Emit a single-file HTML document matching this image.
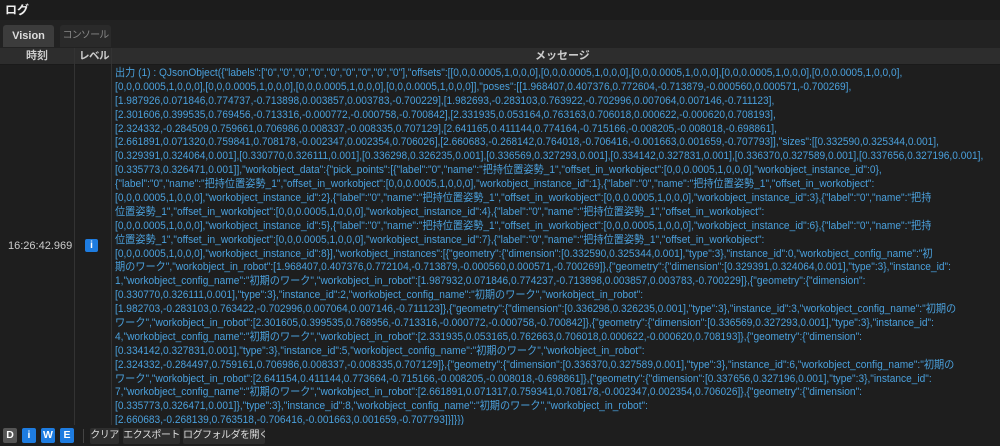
<!DOCTYPE html>
<html><head><meta charset="utf-8"><style>
*{margin:0;padding:0;box-sizing:border-box}
html,body{width:1000px;height:446px;overflow:hidden}
body{background:#1e1e1e;font-family:"Liberation Sans","Noto Sans CJK JP",sans-serif;color:#ddd;position:relative}
.title{position:absolute;left:0;top:0;width:1000px;height:20px;background:#1c1c1c;font-size:12px;line-height:20px;padding-left:5px;color:#eee;font-weight:bold}
.tabs{position:absolute;left:0;top:20px;width:1000px;height:28px;background:#222}
.tab{position:absolute;top:5px;height:22px;border-radius:3px 3px 0 0;font-size:11px;line-height:22px;text-align:center;white-space:nowrap;overflow:hidden}
.hdr{position:absolute;left:0;top:48px;width:1000px;height:17px;background:#2d2d2d;font-size:11px;line-height:17px;font-weight:bold;color:#ccc;border-bottom:1px solid #1a1a1a;white-space:nowrap}
.vl{position:absolute;top:48px;width:1px;height:377px;background:#333}
.lines{position:absolute;left:115px;top:67px;font-size:11px;line-height:13.9px;color:#4aa0dc;white-space:nowrap;transform-origin:0 0}
.lines div{height:13.9px}
.bar{position:absolute;left:0;top:425px;width:1000px;height:21px;background:#1e1e1e}
.b{position:absolute;top:3px;height:15px;border-radius:2px;font-size:10.5px;line-height:15px;text-align:center;font-weight:bold;color:#fff}
.btn{position:absolute;top:3px;height:16px;background:#2e2e2e;border-radius:2px;font-size:10px;line-height:16px;text-align:center;color:#ddd;white-space:nowrap;overflow:hidden;letter-spacing:-0.5px}
</style></head><body>
<div class="title">ログ</div>
<div class="tabs">
<div class="tab" style="left:3px;width:51px;background:#3c3c3c;color:#ddd;font-weight:bold">Vision</div>
<div class="tab" style="left:60px;width:51px;background:#2a2a2a;color:#888;font-size:10px;letter-spacing:-0.8px">コンソール</div>
</div>
<div class="hdr"><span style="position:absolute;left:26px">時刻</span><span style="position:absolute;left:79px;font-size:10.5px;letter-spacing:-0.5px">レベル</span><span style="position:absolute;left:535px">メッセージ</span></div>
<div class="vl" style="left:74px"></div><div class="vl" style="left:111px"></div>
<div style="position:absolute;left:8px;top:240px;font-size:11px;color:#ccc">16:26:42.969</div>
<div style="position:absolute;left:85px;top:239px;width:13px;height:13px;background:#1e7ce0;border-radius:2px;color:#fff;font-size:10px;font-weight:bold;text-align:center;line-height:13px">i</div>
<div class="lines" id="L">
<div>出力 (1) : QJsonObject({"labels":["0","0","0","0","0","0","0","0","0"],"offsets":[[0,0,0.0005,1,0,0,0],[0,0,0.0005,1,0,0,0],[0,0,0.0005,1,0,0,0],[0,0,0.0005,1,0,0,0],[0,0,0.0005,1,0,0,0],</div>
<div>[0,0,0.0005,1,0,0,0],[0,0,0.0005,1,0,0,0],[0,0,0.0005,1,0,0,0],[0,0,0.0005,1,0,0,0]],"poses":[[1.968407,0.407376,0.772604,-0.713879,-0.000560,0.000571,-0.700269],</div>
<div>[1.987926,0.071846,0.774737,-0.713898,0.003857,0.003783,-0.700229],[1.982693,-0.283103,0.763922,-0.702996,0.007064,0.007146,-0.711123],</div>
<div>[2.301606,0.399535,0.769456,-0.713316,-0.000772,-0.000758,-0.700842],[2.331935,0.053164,0.763163,0.706018,0.000622,-0.000620,0.708193],</div>
<div>[2.324332,-0.284509,0.759661,0.706986,0.008337,-0.008335,0.707129],[2.641165,0.411144,0.774164,-0.715166,-0.008205,-0.008018,-0.698861],</div>
<div>[2.661891,0.071320,0.759841,0.708178,-0.002347,0.002354,0.706026],[2.660683,-0.268142,0.764018,-0.706416,-0.001663,0.001659,-0.707793]],"sizes":[[0.332590,0.325344,0.001],</div>
<div>[0.329391,0.324064,0.001],[0.330770,0.326111,0.001],[0.336298,0.326235,0.001],[0.336569,0.327293,0.001],[0.334142,0.327831,0.001],[0.336370,0.327589,0.001],[0.337656,0.327196,0.001],</div>
<div>[0.335773,0.326471,0.001]],"workobject_data":{"pick_points":[{"label":"0","name":"把持位置姿勢_1","offset_in_workobject":[0,0,0.0005,1,0,0,0],"workobject_instance_id":0},</div>
<div>{"label":"0","name":"把持位置姿勢_1","offset_in_workobject":[0,0,0.0005,1,0,0,0],"workobject_instance_id":1},{"label":"0","name":"把持位置姿勢_1","offset_in_workobject":</div>
<div>[0,0,0.0005,1,0,0,0],"workobject_instance_id":2},{"label":"0","name":"把持位置姿勢_1","offset_in_workobject":[0,0,0.0005,1,0,0,0],"workobject_instance_id":3},{"label":"0","name":"把持</div>
<div>位置姿勢_1","offset_in_workobject":[0,0,0.0005,1,0,0,0],"workobject_instance_id":4},{"label":"0","name":"把持位置姿勢_1","offset_in_workobject":</div>
<div>[0,0,0.0005,1,0,0,0],"workobject_instance_id":5},{"label":"0","name":"把持位置姿勢_1","offset_in_workobject":[0,0,0.0005,1,0,0,0],"workobject_instance_id":6},{"label":"0","name":"把持</div>
<div>位置姿勢_1","offset_in_workobject":[0,0,0.0005,1,0,0,0],"workobject_instance_id":7},{"label":"0","name":"把持位置姿勢_1","offset_in_workobject":</div>
<div>[0,0,0.0005,1,0,0,0],"workobject_instance_id":8}],"workobject_instances":[{"geometry":{"dimension":[0.332590,0.325344,0.001],"type":3},"instance_id":0,"workobject_config_name":"初</div>
<div>期のワーク","workobject_in_robot":[1.968407,0.407376,0.772104,-0.713879,-0.000560,0.000571,-0.700269]},{"geometry":{"dimension":[0.329391,0.324064,0.001],"type":3},"instance_id":</div>
<div>1,"workobject_config_name":"初期のワーク","workobject_in_robot":[1.987932,0.071846,0.774237,-0.713898,0.003857,0.003783,-0.700229]},{"geometry":{"dimension":</div>
<div>[0.330770,0.326111,0.001],"type":3},"instance_id":2,"workobject_config_name":"初期のワーク","workobject_in_robot":</div>
<div>[1.982703,-0.283103,0.763422,-0.702996,0.007064,0.007146,-0.711123]},{"geometry":{"dimension":[0.336298,0.326235,0.001],"type":3},"instance_id":3,"workobject_config_name":"初期の</div>
<div>ワーク","workobject_in_robot":[2.301605,0.399535,0.768956,-0.713316,-0.000772,-0.000758,-0.700842]},{"geometry":{"dimension":[0.336569,0.327293,0.001],"type":3},"instance_id":</div>
<div>4,"workobject_config_name":"初期のワーク","workobject_in_robot":[2.331935,0.053165,0.762663,0.706018,0.000622,-0.000620,0.708193]},{"geometry":{"dimension":</div>
<div>[0.334142,0.327831,0.001],"type":3},"instance_id":5,"workobject_config_name":"初期のワーク","workobject_in_robot":</div>
<div>[2.324332,-0.284497,0.759161,0.706986,0.008337,-0.008335,0.707129]},{"geometry":{"dimension":[0.336370,0.327589,0.001],"type":3},"instance_id":6,"workobject_config_name":"初期の</div>
<div>ワーク","workobject_in_robot":[2.641154,0.411144,0.773664,-0.715166,-0.008205,-0.008018,-0.698861]},{"geometry":{"dimension":[0.337656,0.327196,0.001],"type":3},"instance_id":</div>
<div>7,"workobject_config_name":"初期のワーク","workobject_in_robot":[2.661891,0.071317,0.759341,0.708178,-0.002347,0.002354,0.706026]},{"geometry":{"dimension":</div>
<div>[0.335773,0.326471,0.001]},"type":3},"instance_id":8,"workobject_config_name":"初期のワーク","workobject_in_robot":</div>
<div>[2.660683,-0.268139,0.763518,-0.706416,-0.001663,0.001659,-0.707793]}]}})</div>
</div>
<div class="bar">
<div class="b" style="left:3px;width:14px;background:#555">D</div>
<div class="b" style="left:22px;width:14px;background:#1e7ce0">i</div>
<div class="b" style="left:41px;width:14px;background:#1e7ce0">W</div>
<div class="b" style="left:60px;width:14px;background:#1e7ce0">E</div>
<div style="position:absolute;left:83px;top:4px;width:1px;height:14px;background:#444"></div>
<div class="btn" style="left:90px;width:29px">クリア</div>
<div class="btn" style="left:123px;width:57px">エクスポート</div>
<div class="btn" style="left:183px;width:82px">ログフォルダを開く</div>
</div>
<script>
var L=document.getElementById('L');var f=L.firstElementChild;
var w=f.scrollWidth;var s=(983-115)/w;L.style.transform='scaleX('+s+')';
</script>
</body></html>
